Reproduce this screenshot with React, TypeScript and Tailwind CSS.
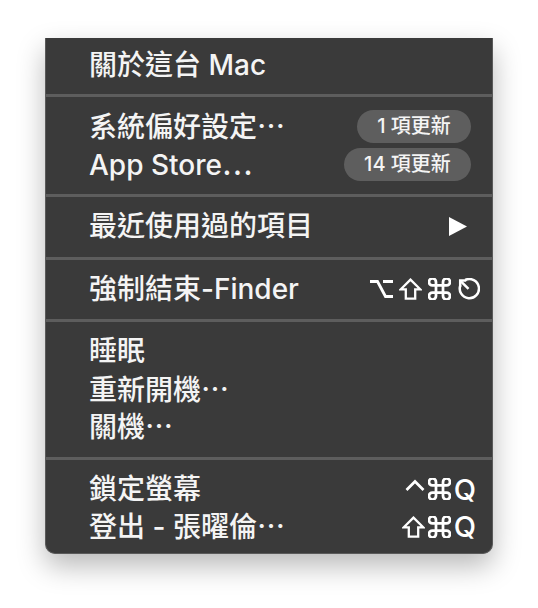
import React from "react";

const font = { fontFamily: '"Inter", "Noto Sans CJK TC", sans-serif' };

const Opt = () => (
  <svg width="23" height="22" viewBox="0 0 23 22" fill="none" stroke="white" strokeWidth="2.8" strokeLinecap="butt" strokeLinejoin="miter">
    <path d="M0 3.5h7.5l8 15h7.5M13 3.5h10" />
  </svg>
);
const Shift = () => (
  <svg width="23" height="22" viewBox="0 0 23 22" fill="none" stroke="white" strokeWidth="2.3" strokeLinejoin="miter">
    <path d="M11.5 1.6L1.8 11.3h5v9.4h9.4v-9.4h5Z" />
  </svg>
);
const Cmd = () => (
  <svg width="23" height="22" viewBox="2.2 2.6 19.6 18.8" fill="none" stroke="white" strokeWidth="2.35">
    <path d="M15 6v12a3 3 0 1 0 3-3H6a3 3 0 1 0 3 3V6a3 3 0 1 0-3 3h12a3 3 0 1 0-3-3" />
  </svg>
);
const Esc = () => (
  <svg width="23" height="22" viewBox="0 0 23 22" fill="none" stroke="white" strokeWidth="2.5" strokeLinecap="butt">
    <path d="M3.4 7.2A9.6 9.6 0 1 0 8.2 2" />
    <path d="M3.2 2.6L11.5 10.9" />
    <path d="M2 2.6h7.2M3.2 1.4v7.2" />
  </svg>
);
const Ctrl = () => (
  <svg width="20" height="22" viewBox="0 0 20 22" fill="none" stroke="white" strokeWidth="2.7">
    <path d="M1.5 12L10 3.5L18.5 12" />
  </svg>
);

const Q = () => (
  <span className="text-[29px] leading-none font-medium text-white" style={{ fontFamily: '"Inter", sans-serif' }}>
    Q
  </span>
);

const Sep = () => <div className="h-[3px] bg-[#5d5d5d]" />;

const Row = ({ children, right }: { children: React.ReactNode; right?: React.ReactNode }) => (
  <div className="h-[37.5px] flex items-center justify-between pl-[43px] pr-[14px]">
    <span className="text-[28px] leading-[37px] font-medium text-[#f4f4f4] whitespace-nowrap">{children}</span>
    {right}
  </div>
);

const Ell = () => <span style={{ fontFamily: '"Noto Sans CJK TC", sans-serif' }}>⋯</span>;

const Pill = ({ children, w }: { children: React.ReactNode; w: string }) => (
  <span className={`${w} h-[33px] rounded-full bg-[#5e5e5e] text-[#f4f4f4] text-[20px] font-medium leading-[33px] text-center mr-[7px]`}>
    {children}
  </span>
);

export default function App() {
  return (
    <div className="w-[538px] h-[608px] bg-white pt-[38px] pl-[45px]" style={font}>
      <div className="w-[448px] bg-[#3a3a3a] border border-t-0 border-[#5a5a5a] rounded-b-[10px] shadow-[0_12px_28px_rgba(0,0,0,0.28)]">
        <div className="pt-[8.5px] pb-[10px]">
          <Row>關於這台 Mac</Row>
        </div>
        <Sep />
        <div className="py-[11px]">
          <Row right={<Pill w="w-[114px]">1 項更新</Pill>}>
            系統偏好設定<Ell />
          </Row>
          <Row right={<Pill w="w-[127px]">14 項更新</Pill>}>
            App Store<Ell />
          </Row>
        </div>
        <Sep />
        <div className="py-[11px]">
          <Row
            right={
              <svg width="18" height="19" viewBox="0 0 18 19" className="mr-[11px]">
                <path d="M0 0L18 9.5L0 19Z" fill="white" />
              </svg>
            }
          >
            最近使用過的項目
          </Row>
        </div>
        <Sep />
        <div className="py-[11px]">
          <Row
            right={
              <span className="flex items-center gap-[6px] -mr-[2px]">
                <Opt />
                <Shift />
                <Cmd />
                <Esc />
              </span>
            }
          >
            強制結束-Finder
          </Row>
        </div>
        <Sep />
        <div className="py-[11px]">
          <Row>睡眠</Row>
          <Row>
            重新開機<Ell />
          </Row>
          <Row>
            關機<Ell />
          </Row>
        </div>
        <Sep />
        <div className="pt-[11px] pb-[7px]">
          <Row
            right={
              <span className="flex items-center gap-[3px] mr-[2px]">
                <Ctrl />
                <Cmd />
                <Q />
              </span>
            }
          >
            鎖定螢幕
          </Row>
          <Row
            right={
              <span className="flex items-center gap-[3px] mr-[2px]">
                <Shift />
                <Cmd />
                <Q />
              </span>
            }
          >
            登出 - 張曜倫<Ell />
          </Row>
        </div>
      </div>
    </div>
  );
}
